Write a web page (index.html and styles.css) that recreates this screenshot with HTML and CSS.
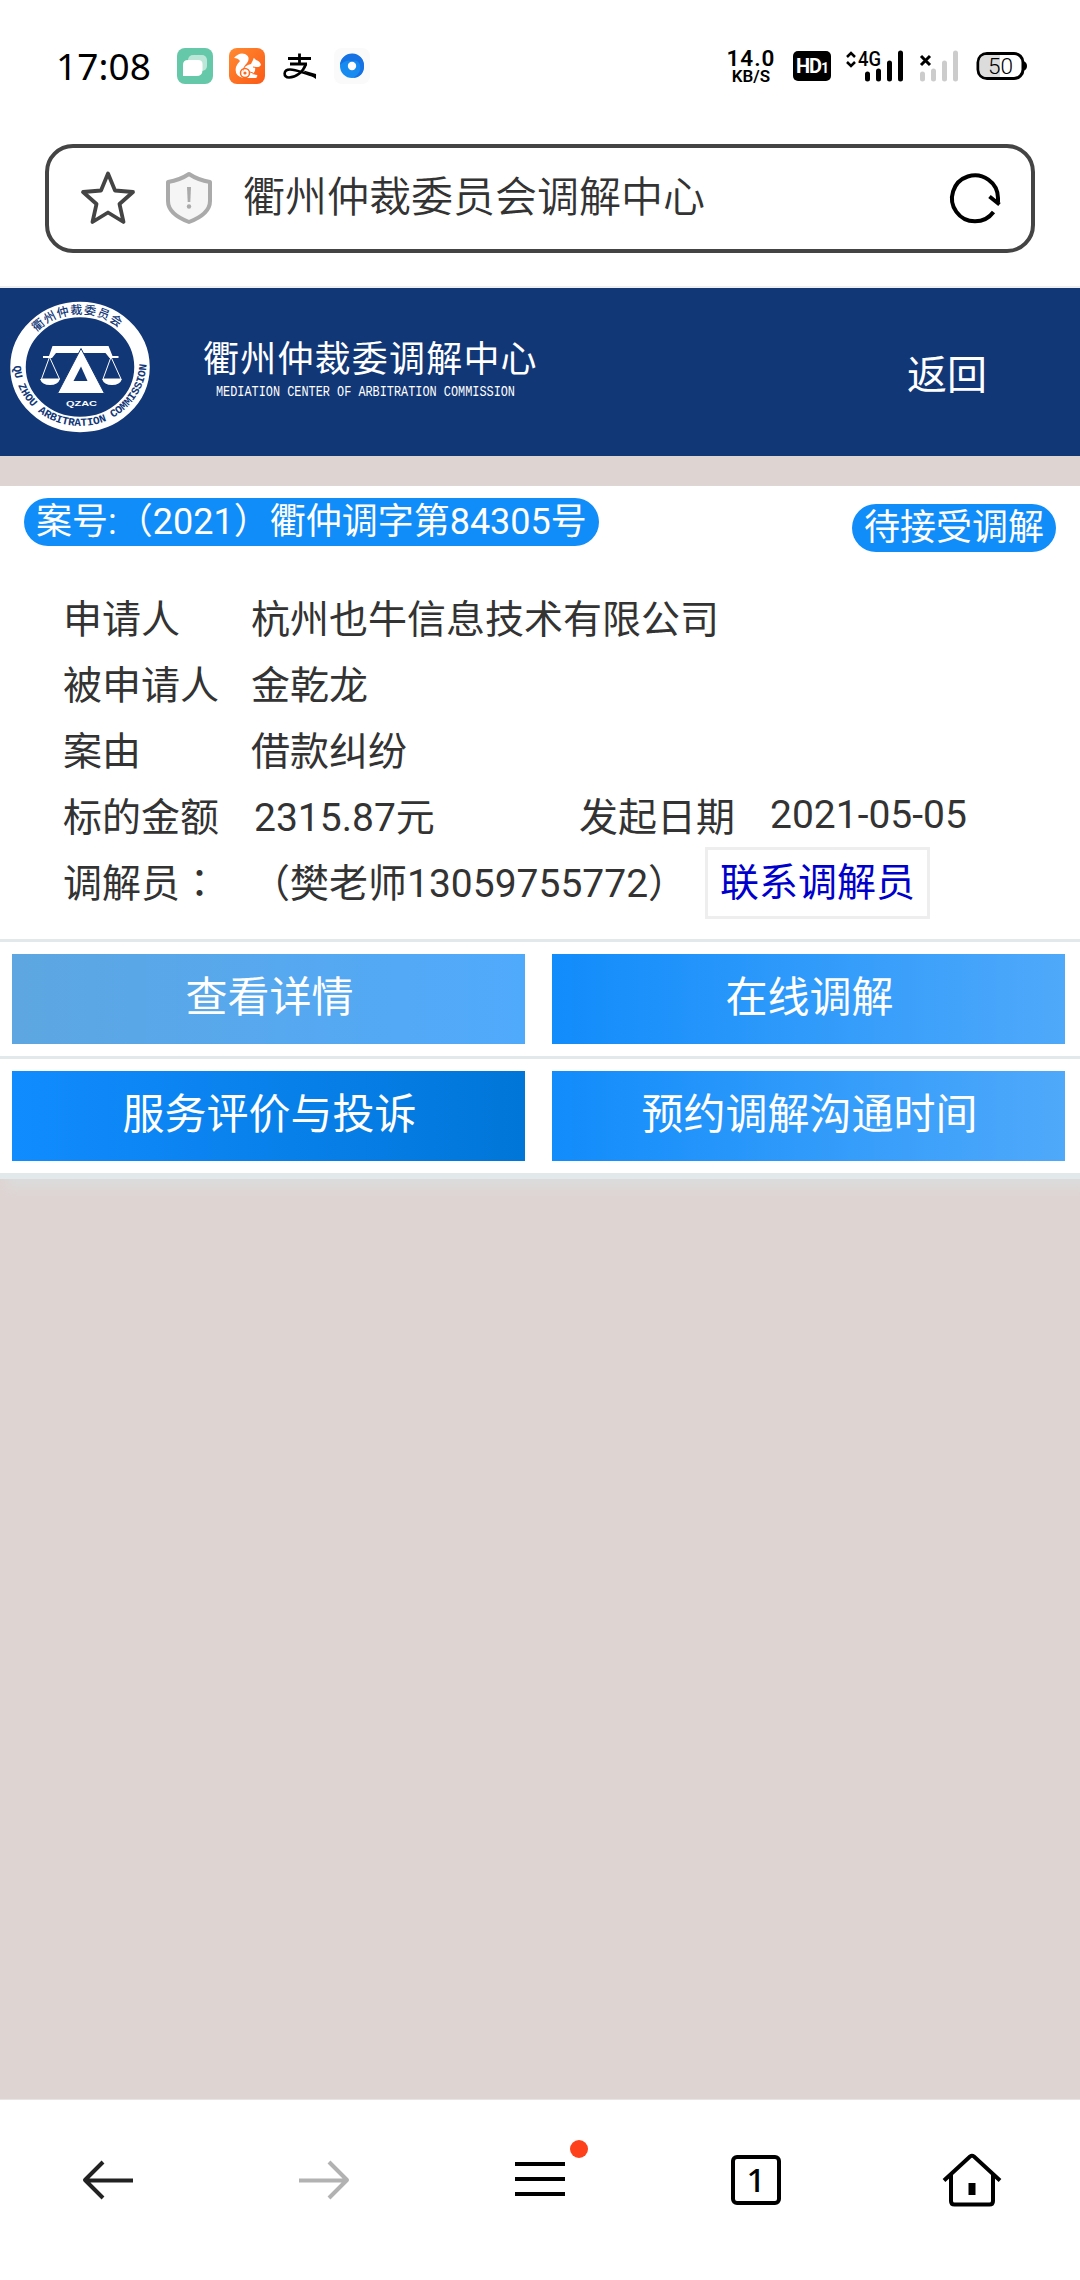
FILE: index.html
```html
<!DOCTYPE html>
<html lang="zh-CN">
<head>
<meta charset="utf-8">
<title>衢州仲裁委员会调解中心</title>
<link rel="stylesheet" href="styles.css">
</head>
<body>
<div class="status">
  <span class="clock">17:08</span>
  <div class="apps">
    <svg width="36" height="36" viewBox="0 0 36 36"><rect width="36" height="36" rx="8" fill="#65c8a8"/><rect x="11" y="7" width="19" height="16" rx="5" fill="#bce6d8"/><path d="M11 12h10q4.500 0 4.500 4v6q0 6-6 6H6V17q0-5 5-5z" fill="#fff"/></svg>
    <svg width="36" height="36" viewBox="0 0 36 36"><defs><linearGradient id="uc" x1="0" y1="0" x2="1" y2="1"><stop offset="0" stop-color="#ff8a32"/><stop offset="1" stop-color="#fb5a16"/></linearGradient></defs><rect width="36" height="36" rx="8" fill="url(#uc)"/><path d="M5 10q5-6 11-4 6 3 2 9-5 5-4 9 1-7 8-8l2-4q1-3 1-2l2 2q4 1 5 5-2 3-6 2 1 5-3 7l5 1q1 2-1 2l1 1H14Q5 28 7 19q1-3 4-6-2-3-6-3z" fill="#fff"/><circle cx="16" cy="25" r="4.500" fill="none" stroke="#fc6a20" stroke-width="1.500"/><circle cx="16" cy="25" r="1.600" fill="#fc6a20"/><path d="M24 19l6 1M21 24l3 1" stroke="#fc6a20"/></svg>
    <svg class="pay" width="34" height="36" viewBox="0 0 34 36" fill="none" stroke="#000"><path d="M5 10.500h23M16.500 5.500v10M7 16h17" stroke-width="2.800"/><path d="M23 16C20 24 13 29.500 6 29.500c-6 0-6-8 1-8 8 0 15 5 26 6.500" stroke-width="2.600"/><path d="M19 22l14 4v5z" fill="#000" stroke="none"/></svg>
    <svg width="36" height="36" viewBox="0 0 36 36"><rect width="36" height="36" rx="8" fill="#fafafa"/><circle cx="18" cy="18" r="12" fill="#188bf0"/><path d="M6 17q6-6 12-4 6-2 8 4 2 8-7 13 11-1 11-12A12 12 0 0 0 6 17z" fill="#1671e3"/><circle cx="18" cy="18" r="4.200" fill="#fff"/></svg>
  </div>
  <div class="rate"><b>14.0</b><b class="unit">KB/S</b></div>
  <div class="hd">HD<small>1</small></div>
  <svg class="sig" width="58" height="34" viewBox="0 0 58 34"><path d="M1 8l4-4 4 4M1 13l4 4 4-4" fill="none" stroke="#000" stroke-width="2.500"/><text x="12" y="17" class="net" textLength="23" lengthAdjust="spacingAndGlyphs">4G</text><path d="M21.500 25v5M32.500 22v8M43.500 14v16M54.500 4v26" stroke="#000" stroke-width="5" stroke-linecap="round"/></svg>
  <svg class="sig2" width="40" height="34" viewBox="0 0 40 34"><path d="M2 7l9 9M11 7l-9 9" stroke="#000" stroke-width="3"/><path d="M3.500 25v5M14.500 22v8M25.500 14v16M36.500 4v26" stroke="#ccc" stroke-width="5" stroke-linecap="round"/></svg>
  <svg width="52" height="30" viewBox="0 0 52 30"><path d="M47 10q4 1 4 5t-4 5z"/><rect x="2" y="2.500" width="45" height="25" rx="9" fill="#fff" stroke="#000" stroke-width="3"/><path d="M24 4H11Q3.500 4 3.500 11v8q0 7 7.500 7h13z" fill="#dcdcdc"/><text x="12" y="22.500" class="bat" textLength="25" lengthAdjust="spacingAndGlyphs">50</text></svg>
</div>
<div class="address">
  <svg width="56" height="56" viewBox="0 0 56 56"><path d="M28 3.500l7 17 18 1.500-13.500 12 4 18L28 42.500 12.500 52l4-18L3 22l18-1.500z" fill="none" stroke="#444" stroke-width="3.800" stroke-linejoin="round"/></svg>
  <svg class="shield" width="48" height="54" viewBox="0 0 48 54"><path d="M24 3q9 6 21 8v19q0 13-21 21Q3 43 3 30V11Q15 9 24 3z" fill="#f5f5f5" stroke="#aaa" stroke-width="4" stroke-linejoin="round"/><path d="M22 16h4l-.7 15h-2.600z" fill="#aaa"/><circle cx="24" cy="35.500" r="2.200" fill="#aaa"/></svg>
  <span class="page-name">衢州仲裁委员会调解中心</span>
  <svg class="reload" width="54" height="54" viewBox="0 0 54 54" fill="none" stroke="#000" stroke-width="4"><path d="M45.500 41A23 23 0 1 1 50 27v4M41.500 25.500l10 8"/></svg>
</div>
<header class="banner">
  <svg class="seal" width="140" height="130" viewBox="0 0 140 130">
    <defs><path id="top" d="M12.500 65a57.500 53 0 0 1 115 0"/><path id="bot" d="M3.500 60a66.500 64 0 0 0 133 0"/></defs>
    <ellipse cx="70" cy="65" rx="62" ry="57.500" fill="none" stroke="#fff" stroke-width="15.500"/>
    <text class="seal-cn" fill="#123777"><textPath href="#top" startOffset="22%">衢州仲裁委员会</textPath></text>
    <text class="seal-en" fill="#123777"><textPath href="#bot" startOffset="2%">QU ZHOU ARBITRATION COMMISSION</textPath></text>
    <path d="M42.500 44h56l4 10h6v2h-9l-4-5H46l-4 5h-9v-2h6z" fill="#fff"/>
    <path d="M71 46.500L47.500 91.500h47z" fill="#fff" stroke="#123777"/><path d="M71 64.500l-7.500 14.500h14z" fill="#123777"/>
    <path d="M39.500 55l-8 22h18zM101 55l-8 22h18z" fill="none" stroke="#fff"/><path d="M30 77h20q-2 6-10 6t-10-6zM92 77h20q-2 6-10 6t-10-6z" fill="#fff"/>
    <text class="seal-tag" x="56" y="104" fill="#fff" textLength="31" lengthAdjust="spacingAndGlyphs">QZAC</text>
  </svg>
  <div class="brand">
    <span class="brand-cn">衢州仲裁委调解中心</span>
    <svg width="302" height="18" viewBox="0 0 302 18"><text class="brand-en" x="1" y="13" fill="#fff" textLength="299" lengthAdjust="spacingAndGlyphs">MEDIATION CENTER OF ARBITRATION COMMISSION</text></svg>
  </div>
  <a class="back">返回</a>
</header>
<main>
  <section class="card">
    <div class="tags"><span class="pill">案号:（2021）衢仲调字第84305号</span><span class="pill state">待接受调解</span></div>
    <dl class="facts">
      <div class="row"><dt>申请人</dt><dd>杭州也牛信息技术有限公司</dd></div>
      <div class="row"><dt>被申请人</dt><dd>金乾龙</dd></div>
      <div class="row"><dt>案由</dt><dd>借款纠纷</dd></div>
      <div class="row"><dt>标的金额</dt><dd class="amount">2315.87元</dd><dt class="date-label">发起日期</dt><dd class="date">2021-05-05</dd></div>
      <div class="row"><dt>调解员<span class="colon" lang="zh-TW">：</span></dt><dd>（樊老师13059755772）</dd><dd><a class="contact">联系调解员</a></dd></div>
    </dl>
    <div class="actions"><a class="btn detail">查看详情</a><a class="btn">在线调解</a></div>
    <div class="actions"><a class="btn rate-btn">服务评价与投诉</a><a class="btn">预约调解沟通时间</a></div>
  </section>
</main>
<nav class="toolbar">
  <svg width="60" height="60" viewBox="0 0 60 60" fill="none" stroke="#222" stroke-width="4"><path d="M55 30.500H8M25 12L7 30l18 18" stroke-linejoin="round"/></svg>
  <svg width="60" height="60" viewBox="0 0 60 60" fill="none" stroke="#b2b2b2" stroke-width="4"><path d="M5 30.500h47M35 12l18 18-18 18" stroke-linejoin="round"/></svg>
  <span class="menu"><svg width="60" height="60" viewBox="0 0 60 60" stroke="#000" stroke-width="4"><path d="M5 14h50M5 29h50M5 44h50"/></svg><i class="dot"></i></span>
  <span class="tabs">1</span>
  <svg width="60" height="60" viewBox="0 0 60 60" fill="none" stroke="#000" stroke-width="4"><path d="M2 30.500L28 6.500q2-1.500 4 0l26 24M9 25v26q0 3.500 3.500 3.500h35q3.500 0 3.500-3.500V25"/><path d="M30 33v12" stroke-width="7"/></svg>
</nav>
</body>
</html>
```
FILE: styles.css
```css
* { box-sizing: border-box; }
body {
  margin: 0;
  width: 1080px;
  height: 2280px;
  display: flex;
  flex-direction: column;
  background: #fff;
  color: #333;
  font-family: Roboto, "Noto Sans CJK SC", sans-serif;
  overflow: hidden;
}
svg { display: block; flex: none; overflow: visible; }
span, a, dt, dd { white-space: nowrap; }

/* phone status bar */
.status { height: 132px; padding: 0 52px 0 56px; display: flex; align-items: center; color: #000; }
.clock { width: 121px; font: 37px/40px "Noto Sans", sans-serif; letter-spacing: 0.1px; }
.apps { display: flex; gap: 16px; }
.pay { margin: 0 1px 0 2px; }
.rate { margin-left: auto; width: 48px; display: flex; flex-direction: column; align-items: center; font-size: 22.500px; line-height: 20px; }
.rate b { font-weight: 600; letter-spacing: 1px; }
.rate .unit { font-size: 17px; line-height: 16px; letter-spacing: 0; }
.hd { width: 38px; height: 30px; margin: 0 15px 0 18px; border-radius: 5px; background: #000; color: #fff; font: bold 20px/31px Roboto, sans-serif; text-align: center; letter-spacing: -1px; }
.hd small { font-size: 14px; }
.net { font: 500 20px Roboto, sans-serif; }
.sig { margin-right: 15px; }
.sig2 { margin-right: 17px; }
.bat { font: 300 22px Roboto, sans-serif; }

/* address bar */
.address { height: 109px; margin: 12px 45px 33px; padding: 0 29px 2px 31px; display: flex; align-items: center; border: 4px solid #444; border-radius: 28px; }
.shield { margin-left: 29px; }
.page-name { margin: 0 auto 0 30px; font-size: 42px; line-height: 60px; font-weight: 350; }

/* site banner */
.banner { height: 170px; padding: 0 93px 0 10px; display: flex; align-items: center; border-top: 2px solid #eee; background: #123777; color: #fff; }
.seal { margin-bottom: 11px; }
.seal-cn { font: 500 12px "Noto Sans CJK SC", sans-serif; letter-spacing: 1px; }
.seal-en { font: bold 11px "Liberation Mono", monospace; }
.seal-tag { font: bold 7.500px "Liberation Sans", sans-serif; }
.brand { margin: 0 auto 5px 53px; }
.brand-cn { display: block; font-size: 36px; line-height: 44px; letter-spacing: 1.200px; }
.brand svg { margin: 1px 0 0 12px; }
.brand-en { font: 14.500px "Liberation Mono", monospace; }
.back { margin-top: 8px; font-size: 40px; line-height: 50px; }

/* case card */
main { flex: 1; padding-top: 30px; background: #ded5d3; }
.card { background: #fff; border-bottom: 6px solid #e1e9ea; box-shadow: 8px 8px 10px #dbdcdc; }
.tags { height: 101px; padding: 12px 24px 0; display: flex; justify-content: space-between; align-items: flex-start; }
.pill { height: 48px; padding: 0 12px; border-radius: 24px; background: #118dfa; color: #fff; font-size: 36px; line-height: 49px; }
.state { margin-top: 6px; }
.facts { margin: 0; height: 352px; padding-left: 63px; font-size: 39px; }
.row { height: 66px; display: flex; align-items: center; line-height: 56px; }
dt { width: 188px; }
dd { margin: 0; }
.colon { font-family: "Noto Sans CJK TC", sans-serif; line-height: 0; }
.amount { width: 328px; padding-left: 3px; }
.date-label { width: 191px; }
.date { margin-top: -6px; }
.contact { display: block; height: 72px; margin: -2px 0 0 18px; padding: 0 12px; border: 3px solid #eee; color: #0000cd; line-height: 66px; }
.actions { height: 117px; padding: 12px 15px 12px 12px; display: flex; gap: 27px; border-top: 3px solid #e1e9ea; }
.btn { flex: 1; height: 90px; padding-left: 2px; background: linear-gradient(90deg, #118cfb, #4fa9fa); color: #fff; font-size: 42px; line-height: 88px; text-align: center; }
.detail { background: linear-gradient(90deg, #5da6e1, #50aafc); }
.rate-btn { background: linear-gradient(90deg, #118cff, #0076d8); }

/* browser toolbar */
.toolbar { height: 181px; padding-bottom: 21px; display: grid; grid-template-columns: repeat(5, 1fr); place-items: center; background: #fff; border-top: 1px solid #e8e4e3; }
.menu { position: relative; }
.dot { position: absolute; left: 60px; top: -10px; width: 18px; height: 18px; border-radius: 50%; background: #fe411b; }
.tabs { width: 50px; height: 50px; border: 4px solid #000; border-radius: 6px; color: #000; font: 500 33px/42px "Noto Sans", sans-serif; text-align: center; }
```
